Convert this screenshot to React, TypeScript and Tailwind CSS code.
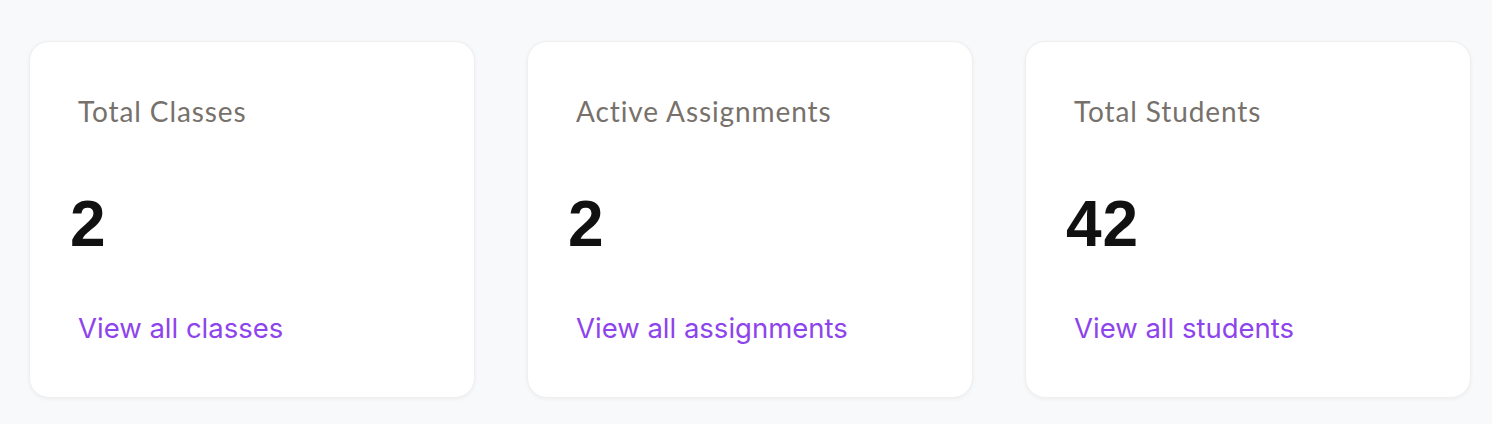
import React from "react";

const cards = [
  { title: "Total Classes", value: "2", link: "View all classes" },
  { title: "Active Assignments", value: "2", link: "View all assignments" },
  { title: "Total Students", value: "42", link: "View all students" },
];

export default function App() {
  return (
    <div className="h-[424px] w-full bg-[#f8f9fa] pl-[29px] pr-[21px] pt-[41px]">
      <div className="grid grid-cols-3 gap-[52px]">
        {cards.map((c) => (
          <div
            key={c.title}
            className="flex h-[357px] flex-col rounded-[20px] border border-[#efefef] bg-white px-[48px] pt-[49px] shadow-[0_1px_4px_rgba(0,0,0,0.05)]"
          >
            <div className="text-[28px] leading-[40px] tracking-[0.9px] text-[#77716c] [font-family:Lato,'Noto_Sans',sans-serif]">
              {c.title}
            </div>
            <div className="-ml-[8px] mt-[61px] text-[64px] font-bold leading-[64px] tracking-[1px] text-[#111111] [font-family:'Liberation_Sans',Arial,sans-serif]">
              {c.value}
            </div>
            <div className="mt-[52px] text-[27.5px] leading-[40px] text-[#8e44ec] [font-family:Inter,sans-serif]">
              <a href="#">{c.link}</a>
            </div>
          </div>
        ))}
      </div>
    </div>
  );
}
